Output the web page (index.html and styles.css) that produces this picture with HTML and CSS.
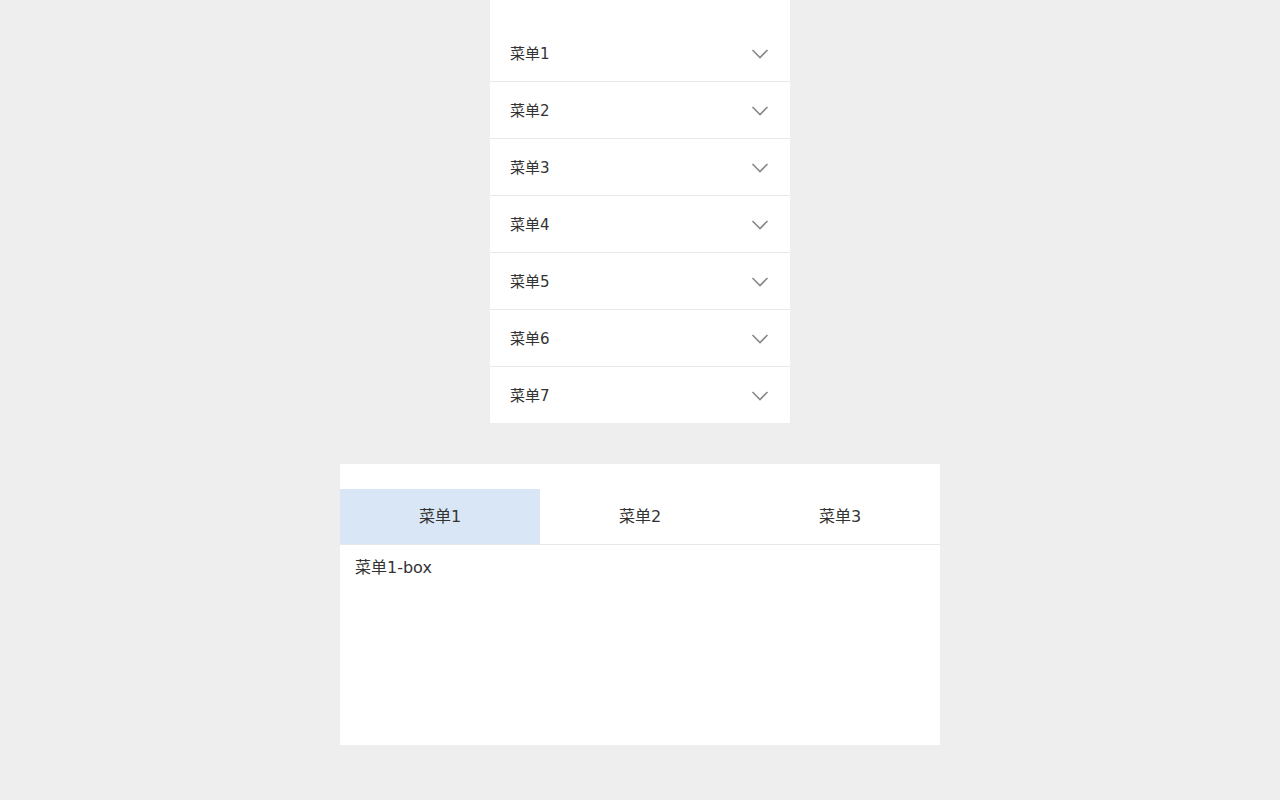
FILE: index.html
```html
<!DOCTYPE html>
<html lang="zh">
<head>
<meta charset="utf-8">
<link rel="stylesheet" href="styles.css">
</head>
<body>
<div class="accordion">
  <div class="acc-item"><span>菜单1</span><svg class="chev" viewBox="0 0 18 12" width="18" height="12"><polyline points="1.5,2 9,9.5 16.5,2"/></svg></div>
  <div class="acc-item"><span>菜单2</span><svg class="chev" viewBox="0 0 18 12" width="18" height="12"><polyline points="1.5,2 9,9.5 16.5,2"/></svg></div>
  <div class="acc-item"><span>菜单3</span><svg class="chev" viewBox="0 0 18 12" width="18" height="12"><polyline points="1.5,2 9,9.5 16.5,2"/></svg></div>
  <div class="acc-item"><span>菜单4</span><svg class="chev" viewBox="0 0 18 12" width="18" height="12"><polyline points="1.5,2 9,9.5 16.5,2"/></svg></div>
  <div class="acc-item"><span>菜单5</span><svg class="chev" viewBox="0 0 18 12" width="18" height="12"><polyline points="1.5,2 9,9.5 16.5,2"/></svg></div>
  <div class="acc-item"><span>菜单6</span><svg class="chev" viewBox="0 0 18 12" width="18" height="12"><polyline points="1.5,2 9,9.5 16.5,2"/></svg></div>
  <div class="acc-item"><span>菜单7</span><svg class="chev" viewBox="0 0 18 12" width="18" height="12"><polyline points="1.5,2 9,9.5 16.5,2"/></svg></div>
</div>
<div class="tabs">
  <div class="tab-bar">
    <div class="tab active">菜单1</div>
    <div class="tab">菜单2</div>
    <div class="tab">菜单3</div>
  </div>
  <div class="tab-content">菜单1-box</div>
</div>
</body>
</html>
```
FILE: styles.css
```css
html, body {
  margin: 0;
  padding: 0;
  background: #eeeeee;
  font-family: "DejaVu Sans", "Noto Sans CJK SC", sans-serif;
  color: #333333;
}
.accordion {
  width: 300px;
  margin: 0 auto;
  background: #ffffff;
  padding-top: 25px;
}
.acc-item {
  height: 56px;
  display: flex;
  align-items: center;
  justify-content: space-between;
  padding: 0 21px 0 20px;
  font-size: 15px;
  line-height: 20px;
  border-bottom: 1px solid #e8e8e8;
}
.acc-item span {
  margin-top: 2px;
}
.acc-item:last-child {
  border-bottom: none;
}
.chev {
  margin-top: 2px;
}
.chev polyline {
  fill: none;
  stroke: #888888;
  stroke-width: 1.6;
}
.tabs {
  width: 600px;
  margin: 41px auto 0;
  background: #ffffff;
  padding-top: 25px;
}
.tab-bar {
  display: flex;
  border-bottom: 1px solid #e8e8e8;
}
.tab {
  flex: 1;
  height: 55px;
  display: flex;
  align-items: center;
  justify-content: center;
  font-size: 16px;
  line-height: 20px;
}
.tab.active {
  background: #d8e6f5;
}
.tab-content {
  height: 200px;
  box-sizing: border-box;
  padding: 13px 15px;
  font-size: 16px;
  line-height: 20px;
}
```
